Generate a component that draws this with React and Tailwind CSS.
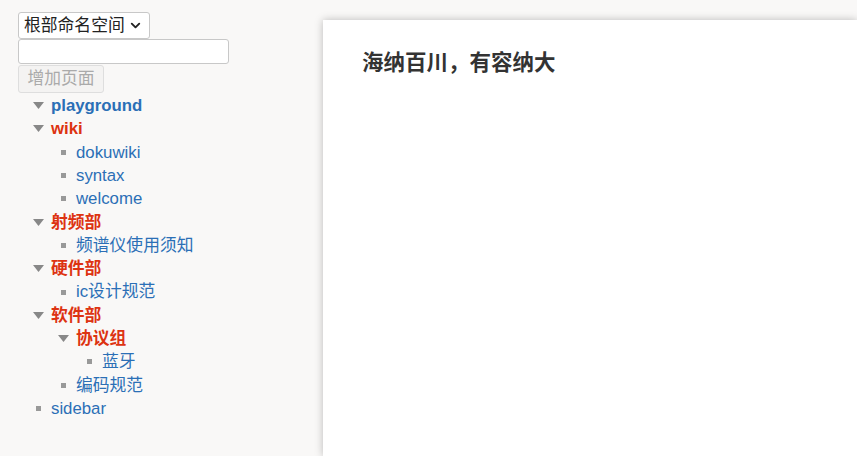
import { ChevronDown } from 'lucide-react'

const tree = [
  { label: 'playground', level: 0, ns: true, open: true, color: 'blue' },
  { label: 'wiki', level: 0, ns: true, open: true, color: 'red' },
  { label: 'dokuwiki', level: 1 },
  { label: 'syntax', level: 1 },
  { label: 'welcome', level: 1 },
  { label: '射频部', level: 0, ns: true, color: 'red' },
  { label: '频谱仪使用须知', level: 1 },
  { label: '硬件部', level: 0, ns: true, color: 'red' },
  { label: 'ic设计规范', level: 1 },
  { label: '软件部', level: 0, ns: true, color: 'red' },
  { label: '协议组', level: 1, ns: true, color: 'red' },
  { label: '蓝牙', level: 2 },
  { label: '编码规范', level: 1 },
  { label: 'sidebar', level: 0 },
]

const indent = ['pl-[33px]', 'pl-[58px]', 'pl-[84px]']

function Marker({ ns }) {
  if (ns) {
    return (
      <span className="w-[18px] flex items-center justify-start">
        <svg width="11" height="7" viewBox="0 0 11 7">
          <polygon points="0,0 11,0 5.5,7" fill="#888" />
        </svg>
      </span>
    )
  }
  return (
    <span className="w-[18px] flex items-center justify-start pl-[3px]">
      <span className="w-[5px] h-[5px] bg-[#999]" />
    </span>
  )
}

export default function App() {
  return (
    <div
      className="flex min-h-[456px] w-full bg-[#f9f8f7] text-[16.8px]"
      style={{ fontFamily: '"Liberation Sans", Arial, "Noto Sans CJK SC", sans-serif' }}
    >
      <aside className="w-[323px] shrink-0 pt-[12px] pl-[18px]">
        <div className="flex flex-col items-start">
          <div className="w-[132px] h-[27px] flex items-center justify-between pl-[5px] pr-[6px] bg-white border border-[#c8c8c8] rounded-[3px] text-[#222]">
            <span>根部命名空间</span>
            <ChevronDown className="w-[15px] h-[15px]" strokeWidth={3} />
          </div>
          <div className="w-[211px] h-[25px] bg-white border border-[#c8c8c8] rounded-[3px]" />
          <div className="mt-[1px] h-[28px] w-[86px] flex items-center justify-center bg-[#f4f3f2] border border-[#dedede] rounded-[3px] text-[#aaa]">
            增加页面
          </div>
        </div>
        <ul className="-ml-[18px] mt-[1px]">
          {tree.map((n, i) => (
            <li key={i} className={`flex items-center h-[23.3px] ${indent[n.level]}`}>
              <Marker ns={n.ns} />
              <span
                className={
                  n.ns
                    ? n.color === 'red'
                      ? 'font-bold text-[#dd3311]'
                      : 'font-bold text-[#2b6fb6]'
                    : 'text-[#2b6fb6]'
                }
              >
                {n.label}
              </span>
            </li>
          ))}
        </ul>
      </aside>
      <main className="flex-1 mt-[20px] bg-white shadow-[0_0_8px_rgba(0,0,0,0.25)] pl-[39px] pt-[28px]">
        <h1 className="text-[21.5px] font-bold text-[#333] leading-[30px]">海纳百川，有容纳大</h1>
      </main>
    </div>
  )
}
